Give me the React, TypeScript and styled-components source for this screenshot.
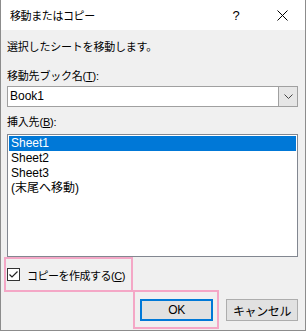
import React from "react";
import styled, { createGlobalStyle } from "styled-components";

const Global = createGlobalStyle`
  html, body { margin: 0; padding: 0; background: #ffffff; }
  * { box-sizing: border-box; }
`;

const FONT = `"Liberation Sans", "Noto Sans CJK JP", sans-serif`;

const Window = styled.div`
  width: 306px;
  height: 331px;
  display: flex;
  flex-direction: column;
  background: #f0f0f0;
  border-left: 1px solid #8c8c8c;
  border-right: 1px solid #8c8c8c;
  border-bottom: 1px solid #8c8c8c;
  font-family: ${FONT};
  color: #000;
  overflow: hidden;
`;

const TitleBar = styled.div`
  height: 30px;
  background: #ffffff;
  display: flex;
  align-items: center;
  padding-left: 9px;
  flex-shrink: 0;
`;

const Title = styled.div`
  flex: 1;
  font-size: 11px;
  letter-spacing: -0.4px;
`;

const TitleButton = styled.div`
  width: 46px;
  height: 30px;
  display: flex;
  align-items: center;
  justify-content: center;
  font-size: 13px;
`;

const Body = styled.div`
  flex: 1;
  display: flex;
  flex-direction: column;
  padding: 0 7px 0 6px;
`;

const Label = styled.div<{ $mt: number }>`
  margin-top: ${(p) => p.$mt}px;
  height: 15px;
  line-height: 15px;
  font-size: 11px;
  letter-spacing: -0.2px;
  white-space: nowrap;
`;

const Combo = styled.div`
  margin-top: 2px;
  height: 21px;
  display: flex;
  background: #ffffff;
  border: 1px solid #a0a0a0;
`;

const ComboText = styled.div`
  flex: 1;
  font-size: 12px;
  line-height: 19px;
  padding-left: 2px;
`;

const ComboButton = styled.div`
  width: 19px;
  background: #e6e6e6;
  border-left: 1px solid #a0a0a0;
  display: flex;
  align-items: center;
  justify-content: center;
`;

const ListBox = styled.div`
  margin-top: 4px;
  height: 123px;
  background: #ffffff;
  border: 1px solid #828790;
  padding: 1px;
  display: flex;
  flex-direction: column;
`;

const ListItem = styled.div<{ $selected?: boolean }>`
  height: 15px;
  line-height: 15px;
  font-size: 12px;
  padding-left: 2px;
  background: ${(p) => (p.$selected ? "#0078d7" : "transparent")};
  color: ${(p) => (p.$selected ? "#ffffff" : "#000000")};
  white-space: nowrap;
`;

const CheckFrame = styled.div`
  margin-left: -3px;
  width: 129px;
  height: 35px;
  border: 2px solid #f4a7c6;
  display: flex;
  align-items: center;
  padding-left: 1px;
  gap: 7px;
`;

const CheckBox = styled.div`
  width: 13px;
  height: 13px;
  border: 1px solid #333333;
  background: #ffffff;
  display: flex;
  align-items: center;
  justify-content: center;
`;

const CheckLabel = styled.span`
  font-size: 11px;
  letter-spacing: -0.5px;
  white-space: nowrap;
`;

const ButtonRow = styled.div`
  margin-top: -2px;
  display: flex;
  justify-content: flex-end;
  align-items: flex-start;
  gap: 7px;
`;

const ButtonFrame = styled.div`
  border: 2px solid #f4a7c6;
  padding: 7px 4px 6px 5px;
`;

const Button = styled.div<{ $default?: boolean }>`
  width: ${(p) => (p.$default ? 73 : 72)}px;
  height: 22px;
  background: #e1e1e1;
  border: ${(p) => (p.$default ? "2px solid #0078d7" : "1px solid #adadad")};
  display: flex;
  align-items: center;
  justify-content: center;
  font-size: 12px;
  letter-spacing: -0.4px;
  margin-top: ${(p) => (p.$default ? 0 : 9)}px;
`;

const U = styled.span`
  text-decoration: underline;
`;

export default function App() {
  return (
    <>
      <Global />
      <Window>
        <TitleBar>
          <Title>移動またはコピー</Title>
          <TitleButton>?</TitleButton>
          <TitleButton>
            <svg width="11" height="11" viewBox="0 0 11 11">
              <path d="M0.5 0.5 L10.5 10.5 M10.5 0.5 L0.5 10.5" stroke="#000" strokeWidth="1" fill="none" />
            </svg>
          </TitleButton>
        </TitleBar>
        <Body>
          <Label $mt={10}>選択したシートを移動します。</Label>
          <Label $mt={14}>
            移動先ブック名(<U>T</U>):
          </Label>
          <Combo>
            <ComboText>Book1</ComboText>
            <ComboButton>
              <svg width="9" height="5" viewBox="0 0 9 5">
                <path d="M0.5 0.5 L4.5 4.5 L8.5 0.5" stroke="#444" strokeWidth="1" fill="none" />
              </svg>
            </ComboButton>
          </Combo>
          <Label $mt={8}>
            挿入先(<U>B</U>):
          </Label>
          <ListBox>
            <ListItem $selected>Sheet1</ListItem>
            <ListItem>Sheet2</ListItem>
            <ListItem>Sheet3</ListItem>
            <ListItem>(末尾へ移動)</ListItem>
          </ListBox>
          <CheckFrame>
            <CheckBox>
              <svg width="11" height="11" viewBox="0 0 11 11">
                <path d="M1.5 5.5 L4 8 L9.5 2.5" stroke="#222" strokeWidth="1.2" fill="none" />
              </svg>
            </CheckBox>
            <CheckLabel>
              コピーを作成する(<U>C</U>)
            </CheckLabel>
          </CheckFrame>
          <ButtonRow>
            <ButtonFrame>
              <Button $default>OK</Button>
            </ButtonFrame>
            <Button>キャンセル</Button>
          </ButtonRow>
        </Body>
      </Window>
    </>
  );
}
